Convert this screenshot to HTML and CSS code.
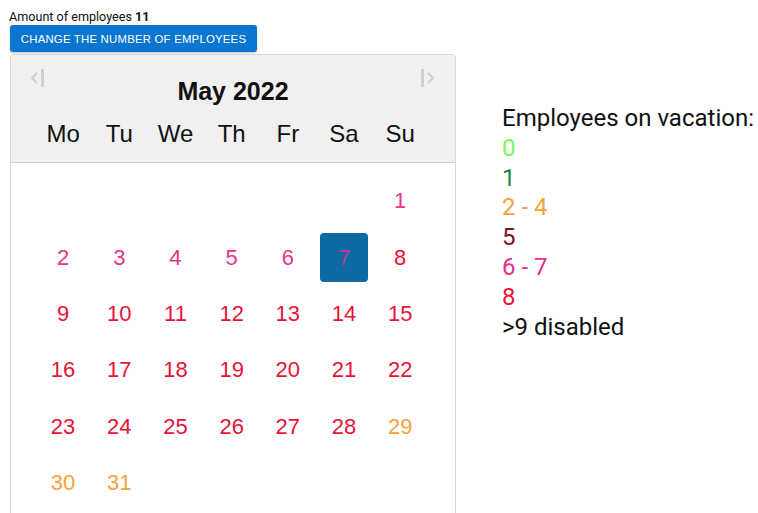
FILE: index.html
```html
<!DOCTYPE html>
<html lang="en">
<head>
<meta charset="utf-8">
<title>Vacation calendar</title>
<link rel="stylesheet" href="styles.css">
</head>
<body>
<div class="page">
  <div class="left">
    <div class="amount">Amount of employees <b>11</b></div>
    <button class="change-btn" type="button">Change the number of employees</button>
    <div class="calendar">
      <div class="cal-head">
        <span class="nav nav-prev">
          <svg width="16" height="22" viewBox="0 0 16 22"><path d="M7 6 L2 11 L7 16" fill="none" stroke="#cfcfcf" stroke-width="2"/><rect x="11" y="2" width="3" height="18" fill="#cfcfcf"/></svg>
        </span>
        <span class="nav nav-next">
          <svg width="16" height="22" viewBox="0 0 16 22"><rect x="2" y="2" width="3" height="18" fill="#cfcfcf"/><path d="M9 6 L14 11 L9 16" fill="none" stroke="#cfcfcf" stroke-width="2"/></svg>
        </span>
        <div class="month">May 2022</div>
        <div class="weekdays">
          <span>Mo</span><span>Tu</span><span>We</span><span>Th</span><span>Fr</span><span>Sa</span><span>Su</span>
        </div>
      </div>
      <div class="days">
        <span></span><span></span><span></span><span></span><span></span><span></span>
        <span class="d c67">1</span>
        <span class="d c67">2</span><span class="d c67">3</span><span class="d c67">4</span><span class="d c67">5</span><span class="d c67">6</span><span class="d c67 selected">7</span><span class="d c8">8</span>
        <span class="d c8">9</span><span class="d c8">10</span><span class="d c8">11</span><span class="d c8">12</span><span class="d c8">13</span><span class="d c8">14</span><span class="d c8">15</span>
        <span class="d c8">16</span><span class="d c8">17</span><span class="d c8">18</span><span class="d c8">19</span><span class="d c8">20</span><span class="d c8">21</span><span class="d c8">22</span>
        <span class="d c8">23</span><span class="d c8">24</span><span class="d c8">25</span><span class="d c8">26</span><span class="d c8">27</span><span class="d c8">28</span><span class="d c24">29</span>
        <span class="d c24">30</span><span class="d c24">31</span>
      </div>
    </div>
  </div>
  <div class="legend">
    <div class="legend-title">Employees on vacation:</div>
    <div class="c0">0</div>
    <div class="c1">1</div>
    <div class="c24">2 - 4</div>
    <div class="c5">5</div>
    <div class="c67">6 - 7</div>
    <div class="c8">8</div>
    <div class="c9">&gt;9 disabled</div>
  </div>
</div>
</body>
</html>
```

FILE: styles.css
```css
html, body {
  margin: 0;
  padding: 0;
  background: #fff;
  overflow: hidden;
}

.page {
  display: flex;
  align-items: flex-start;
  padding: 9px 0 0 9px;
  font-family: Roboto, "Liberation Sans", sans-serif;
}

.left {
  width: 447px;
  flex: none;
}

.amount {
  font-size: 12.6px;
  line-height: 15px;
  color: #111;
}

.amount b {
  font-weight: 700;
}

.change-btn {
  display: block;
  margin: 1px 0 0 1px;
  width: 247px;
  height: 27px;
  border: 0;
  border-radius: 3px;
  background: #0b76d0;
  color: #fff;
  font-family: "Liberation Sans", Arial, sans-serif;
  font-size: 11.4px;
  letter-spacing: 0.2px;
  text-transform: uppercase;
  padding: 0;
  box-shadow: 0 1px 2px rgba(0, 0, 0, 0.25);
}

.calendar {
  margin: 2px 0 0 1px;
  width: 444px;
  height: 470px;
  border: 1px solid #d8d8d8;
  border-radius: 4px;
  font-family: "Liberation Sans", Arial, sans-serif;
  overflow: hidden;
}

.cal-head {
  position: relative;
  background: #f0f0f0;
  border-bottom: 1px solid #d0d0d0;
  height: 107px;
}

.nav {
  position: absolute;
  top: 12px;
}

.nav-prev { left: 19px; }
.nav-next { right: 20px; }

.month {
  padding-top: 22px;
  text-align: center;
  font-weight: 700;
  font-size: 25px;
  line-height: 28px;
  color: #111;
}

.weekdays {
  display: grid;
  grid-template-columns: repeat(7, 56.2px);
  margin: 15px 0 0 24px;
  font-size: 24px;
  line-height: 28px;
  color: #111;
}

.weekdays span,
.days span {
  text-align: center;
}

.days {
  display: grid;
  grid-template-columns: repeat(7, 56.2px);
  grid-auto-rows: 56.4px;
  margin: 10px 0 0 24px;
  font-size: 22px;
}

.d {
  display: flex;
  align-items: center;
  justify-content: center;
  margin: 4px;
  border-radius: 4px;
}

.selected {
  background: #0d6aa3;
}

.c0 { color: #7cf25c; }
.c1 { color: #168a36; }
.c24 { color: #f5a23c; }
.c5 { color: #7d1127; }
.c67 { color: #ec2c8c; }
.c8 { color: #ea1236; }
.c9 { color: #111; }

.days .c67 { color: #e8348a; }
.days .selected { color: #c0369a; }

.legend {
  margin: 95px 0 0 46px;
  font-size: 24px;
  line-height: 29.8px;
  white-space: nowrap;
}

.legend-title {
  color: #111;
}
```
